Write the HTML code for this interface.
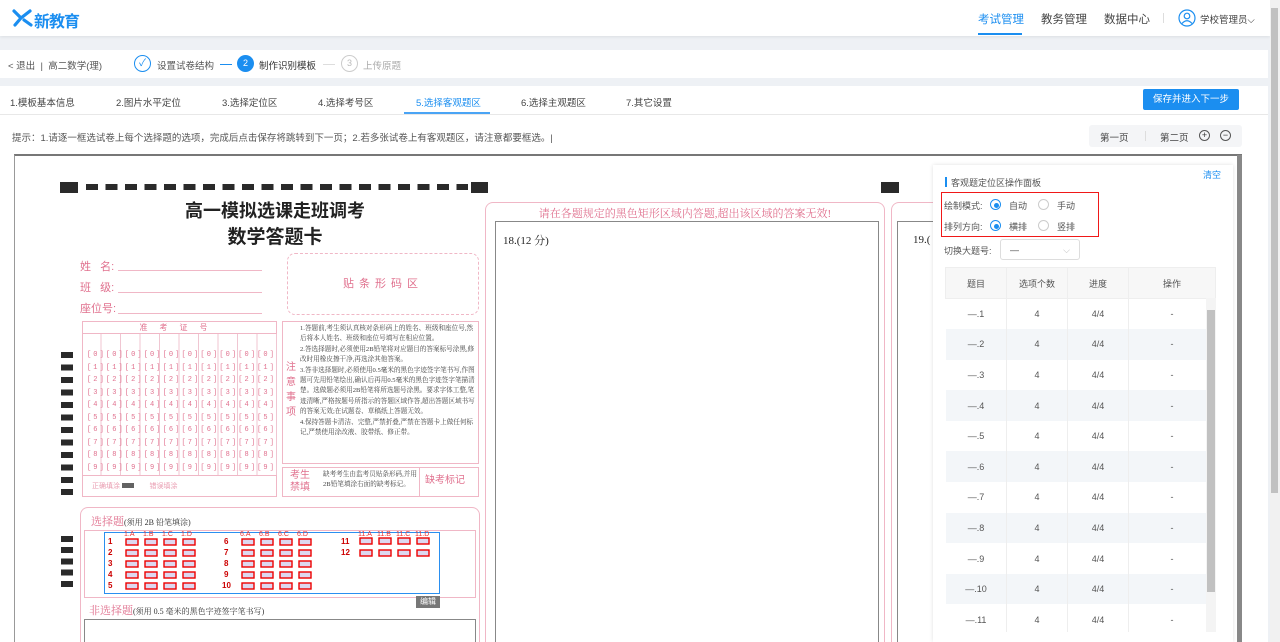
<!DOCTYPE html>
<html><head><meta charset="utf-8">
<style>
*{margin:0;padding:0;box-sizing:border-box}
html{overflow:hidden;width:1280px;height:642px}
body{width:1280px;height:642px;overflow:hidden;background:#eef1f5;font-family:"Liberation Sans","Noto Sans CJK SC",sans-serif;font-size:10px;color:#333;position:relative}
.a{position:absolute}
.pk{color:#e0708e}
.serif{font-family:"Liberation Serif","Noto Serif CJK SC",serif}
.tm{position:absolute;background:#2a2a2a}
</style></head><body>
<!-- header -->
<div class="a" style="left:0;top:0;width:1270px;height:36px;background:#fff;box-shadow:0 1px 3px rgba(0,0,0,.08)"></div>
<svg class="a" style="left:12px;top:9px" width="22" height="18" viewBox="0 0 22 18"><path d="M2 2 L9 9 L3 16 M9 9 L18 2 M12 11 L19 16" stroke="#1b8ef0" stroke-width="3.2" fill="none" stroke-linecap="round"/></svg>
<div class="a" style="left:34px;top:8px;font-size:16px;font-weight:bold;color:#1b8ef0;letter-spacing:-1px">新教育</div>
<div class="a" style="left:978px;top:11px;font-size:11.5px;color:#1b8ef0">考试管理</div>
<div class="a" style="left:978px;top:33px;width:44px;height:2px;background:#1b8ef0"></div>
<div class="a" style="left:1041px;top:11px;font-size:11.5px;color:#444">教务管理</div>
<div class="a" style="left:1104px;top:11px;font-size:11.5px;color:#444">数据中心</div>
<div class="a" style="left:1163px;top:13px;width:1px;height:10px;background:#ddd"></div>
<svg class="a" style="left:1178px;top:9px" width="18" height="18" viewBox="0 0 18 18"><circle cx="9" cy="9" r="8" fill="none" stroke="#1b8ef0" stroke-width="1.2"/><circle cx="9" cy="7" r="2.8" fill="none" stroke="#1b8ef0" stroke-width="1.2"/><path d="M4 14.5 Q9 9 14 14.5" fill="none" stroke="#1b8ef0" stroke-width="1.2"/></svg>
<div class="a" style="left:1200px;top:12px;font-size:9.5px;color:#444">学校管理员⌵</div>
<div class="a" style="left:1270px;top:0;width:10px;height:642px;background:#f1f1f1"></div>
<div class="a" style="left:1271px;top:8px;width:7px;height:485px;background:#c1c1c1"></div>
<!-- step bar -->
<div class="a" style="left:0;top:50px;width:1268px;height:28px;background:#fff"></div>
<div class="a" style="left:8px;top:58px;font-size:9.5px;color:#555">&lt; 退出 &nbsp;| &nbsp;高二数学(理)</div>
<div class="a" style="left:134px;top:55px;width:17px;height:17px;border:1px solid #1b8ef0;border-radius:50%;color:#1b8ef0;font-size:10px;text-align:center;line-height:15px">✓</div>
<div class="a" style="left:157px;top:58px;font-size:9.5px;color:#555">设置试卷结构</div>
<div class="a" style="left:220px;top:64px;width:12px;height:1px;background:#1b8ef0"></div>
<div class="a" style="left:237px;top:55px;width:17px;height:17px;background:#1b8ef0;border-radius:50%;color:#fff;font-size:9px;text-align:center;line-height:17px">2</div>
<div class="a" style="left:259px;top:58px;font-size:9.5px;color:#333">制作识别模板</div>
<div class="a" style="left:323px;top:64px;width:12px;height:1px;background:#ddd"></div>
<div class="a" style="left:341px;top:55px;width:17px;height:17px;border:1px solid #ccc;border-radius:50%;color:#bbb;font-size:9px;text-align:center;line-height:15px">3</div>
<div class="a" style="left:363px;top:58px;font-size:9.5px;color:#aaa">上传原题</div>
<!-- tabs -->
<div class="a" style="left:0;top:86px;width:1268px;height:556px;background:#fff"></div>
<div class="a" style="left:0;top:114px;width:1268px;height:1px;background:#e8e8e8"></div>
<div class="a" style="left:10px;top:95px;font-size:9.5px;color:#444">1.模板基本信息</div>
<div class="a" style="left:116px;top:95px;font-size:9.5px;color:#444">2.图片水平定位</div>
<div class="a" style="left:222px;top:95px;font-size:9.5px;color:#444">3.选择定位区</div>
<div class="a" style="left:318px;top:95px;font-size:9.5px;color:#444">4.选择考号区</div>
<div class="a" style="left:416px;top:95px;font-size:9.5px;color:#1b8ef0">5.选择客观题区</div>
<div class="a" style="left:404px;top:112px;width:86px;height:2px;background:#4aa4f5"></div>
<div class="a" style="left:521px;top:95px;font-size:9.5px;color:#444">6.选择主观题区</div>
<div class="a" style="left:626px;top:95px;font-size:9.5px;color:#444">7.其它设置</div>
<div class="a" style="left:1143px;top:89px;width:96px;height:21px;background:#1b8ef0;border-radius:2px;color:#fff;font-size:9.5px;text-align:center;line-height:21px">保存并进入下一步</div>
<div class="a" style="left:12px;top:130px;font-size:9.5px;color:#555">提示：1.请逐一框选试卷上每个选择题的选项，完成后点击保存将跳转到下一页；2.若多张试卷上有客观题区，请注意都要框选。|</div>
<div class="a" style="left:1089px;top:125px;width:153px;height:22px;background:#f4f5f7;border-radius:3px"></div>
<div class="a" style="left:1100px;top:130px;font-size:9.5px;color:#444">第一页</div>
<div class="a" style="left:1145px;top:131px;width:1px;height:10px;background:#ddd"></div>
<div class="a" style="left:1160px;top:130px;font-size:9.5px;color:#444">第二页</div>
<div class="a" style="left:1199px;top:130px;width:11px;height:11px;border:1px solid #555;border-radius:50%;font-size:9px;line-height:9px;text-align:center">+</div>
<div class="a" style="left:1220px;top:130px;width:11px;height:11px;border:1px solid #555;border-radius:50%;font-size:9px;line-height:8px;text-align:center">−</div>
<!-- paper viewer -->
<div class="a" style="left:14px;top:154px;width:1228px;height:488px;background:#fff;border-top:2px solid #777;border-left:1px solid #999;overflow:hidden"></div>
<div class="a" style="left:1237px;top:155px;width:5px;height:487px;background:#888"></div>
<!-- timing marks top -->
<div class="tm" style="left:60px;top:182px;width:18px;height:11px"></div>
<div class="a" style="left:86px;top:184px;width:382px;height:6px;background:repeating-linear-gradient(90deg,#2a2a2a 0 12px,transparent 12px 19.5px)"></div>
<div class="tm" style="left:471px;top:182px;width:17px;height:11px"></div>
<div class="tm" style="left:881px;top:182px;width:18px;height:11px"></div>
<!-- left side marks -->
<div class="a" style="left:61px;top:352px;width:12px;height:132px;background:repeating-linear-gradient(180deg,#2a2a2a 0 6px,transparent 6px 12.5px)"></div>
<div class="tm" style="left:61px;top:489px;width:12px;height:6px"></div>
<div class="a" style="left:61px;top:536px;width:12px;height:56px;background:repeating-linear-gradient(180deg,#2a2a2a 0 6px,transparent 6px 11.2px)"></div>
<!-- title -->
<div class="a" style="left:150px;top:197px;width:250px;text-align:center;font-size:18px;color:#222;font-weight:bold">高一模拟选课走班调考</div>
<div class="a" style="left:150px;top:222px;width:250px;text-align:center;font-size:19px;color:#222;font-weight:bold">数学答题卡</div>
<div class="a pk" style="left:80px;top:257px;font-size:11px;line-height:21px">姓&nbsp;&nbsp;&nbsp;名:<br>班&nbsp;&nbsp;&nbsp;级:<br>座位号:</div>
<div class="a" style="left:118px;top:270px;width:144px;height:1px;background:#f0b7c6"></div>
<div class="a" style="left:118px;top:292px;width:144px;height:1px;background:#f0b7c6"></div>
<div class="a" style="left:118px;top:313px;width:144px;height:1px;background:#f0b7c6"></div>
<div class="a pk" style="left:287px;top:253px;width:192px;height:62px;border:1px dashed #f0b7c6;border-radius:8px;text-align:center;line-height:60px;font-size:11px;letter-spacing:5px">贴条形码区</div>
<!-- exam number box -->
<div class="a" style="left:82px;top:321px;width:195px;height:176px;border:1px solid #f0b7c6"></div>
<div class="a pk" style="left:82px;top:322px;width:195px;text-align:center;font-size:8px;letter-spacing:12px">准考证号</div>
<div class="a" style="left:82px;top:333px;width:195px;height:1px;background:#f0b7c6"></div>
<div class="a" style="left:82px;top:475px;width:195px;height:1px;background:#f0b7c6"></div>
<div class="a" style="left:82px;top:334px;width:195px;height:141px;background:repeating-linear-gradient(90deg,transparent 0 18.5px,#f0c6d2 18.5px 19.5px)"></div>
<div class="a pk" style="left:87px;top:349px;width:190px;font-size:7px;line-height:12.5px;letter-spacing:2.1px;white-space:pre;font-family:'Liberation Mono',monospace">[0][0][0][0][0][0][0][0][0][0]
[1][1][1][1][1][1][1][1][1][1]
[2][2][2][2][2][2][2][2][2][2]
[3][3][3][3][3][3][3][3][3][3]
[4][4][4][4][4][4][4][4][4][4]
[5][5][5][5][5][5][5][5][5][5]
[6][6][6][6][6][6][6][6][6][6]
[7][7][7][7][7][7][7][7][7][7]
[8][8][8][8][8][8][8][8][8][8]
[9][9][9][9][9][9][9][9][9][9]</div>
<div class="a pk" style="left:92px;top:481px;font-size:7px;opacity:.7">正确填涂 <span style="display:inline-block;width:12px;height:5px;background:#222"></span> &nbsp;&nbsp;&nbsp;&nbsp;&nbsp;&nbsp; 错误填涂</div>
<!-- notes -->
<div class="a" style="left:282px;top:321px;width:197px;height:143px;border:1px solid #f0b7c6"></div>
<div class="a pk" style="left:286px;top:360px;font-size:10px;line-height:15px;width:12px">注意事项</div>
<div class="a serif" style="left:300px;top:324px;width:178px;font-size:6.6px;line-height:10.4px;color:#444">1.答题前,考生须认真核对条形码上的姓名、班级和座位号,然后将本人姓名、班级和座位号填写在相应位置。<br>2.答选择题时,必须使用2B铅笔将对应题目的答案标号涂黑,修改时用橡皮擦干净,再选涂其他答案。<br>3.答非选择题时,必须使用0.5毫米的黑色字迹签字笔书写,作图题可先用铅笔绘出,确认后再用0.5毫米的黑色字迹签字笔描清楚。选做题必须用2B铅笔将所选题号涂黑。要求字体工整,笔迹清晰,严格按题号所指示的答题区域作答,超出答题区域书写的答案无效;在试题卷、草稿纸上答题无效。<br>4.保持答题卡清洁、完整,严禁折叠,严禁在答题卡上做任何标记,严禁使用涂改液、胶带纸、修正带。</div>
<div class="a" style="left:282px;top:467px;width:197px;height:30px;border:1px solid #f0b7c6"></div>
<div class="a pk" style="left:290px;top:470px;font-size:10px;line-height:12px">考生<br>禁填</div>
<div class="a serif" style="left:323px;top:470px;width:95px;font-size:6.6px;line-height:9.5px;color:#444">缺考考生由监考员贴条形码,并用2B铅笔填涂右面的缺考标记。</div>
<div class="a" style="left:419px;top:467px;width:1px;height:30px;background:#f0b7c6"></div>
<div class="a pk" style="left:425px;top:471px;font-size:10px">缺考标记</div>
<!-- choice section -->
<div class="a" style="left:80px;top:507px;width:400px;height:135px;border:1px solid #f0b7c6;border-bottom:none;border-radius:8px 8px 0 0"></div>
<div class="a serif" style="left:91px;top:513px;font-size:11px;color:#e0708e">选择题<span style="font-size:8px;color:#333">(须用 2B 铅笔填涂)</span></div>
<div class="a" style="left:84px;top:530px;width:392px;height:68px;border:1px solid #f0b7c6"></div>
<div class="a" style="left:104px;top:532px;width:336px;height:62px;border:1.5px solid #2a8ff0"></div>
<svg class="a" style="left:100px;top:530px" width="345" height="66" font-family="Liberation Sans" font-weight="bold" font-size="8" fill="#c00">
<defs><g id="rb"><rect x="0" y="0" width="12" height="6" fill="#ddd8f0" stroke="#e00" stroke-width="1.4"/></g></defs>
<text x="8" y="14">1</text><text x="8" y="25">2</text><text x="8" y="36">3</text><text x="8" y="47">4</text><text x="8" y="58">5</text>
<text x="124" y="14">6</text><text x="124" y="25">7</text><text x="124" y="36">8</text><text x="124" y="47">9</text><text x="122" y="58">10</text>
<text x="241" y="14">11</text><text x="241" y="25">12</text>
<g fill="#e33" font-weight="normal" font-size="7"><text x="24" y="6">1.A</text><text x="43" y="6">1.B</text><text x="62" y="6">1.C</text><text x="81" y="6">1.D</text><text x="140" y="6">6.A</text><text x="159" y="6">6.B</text><text x="178" y="6">6.C</text><text x="197" y="6">6.D</text><text x="258" y="6">11.A</text><text x="277" y="6">11.B</text><text x="296" y="6">11.C</text><text x="315" y="6">11.D</text></g>
<use href="#rb" x="26" y="9"/><use href="#rb" x="45" y="9"/><use href="#rb" x="64" y="9"/><use href="#rb" x="83" y="9"/>
<use href="#rb" x="26" y="20"/><use href="#rb" x="45" y="20"/><use href="#rb" x="64" y="20"/><use href="#rb" x="83" y="20"/>
<use href="#rb" x="26" y="31"/><use href="#rb" x="45" y="31"/><use href="#rb" x="64" y="31"/><use href="#rb" x="83" y="31"/>
<use href="#rb" x="26" y="42"/><use href="#rb" x="45" y="42"/><use href="#rb" x="64" y="42"/><use href="#rb" x="83" y="42"/>
<use href="#rb" x="26" y="53"/><use href="#rb" x="45" y="53"/><use href="#rb" x="64" y="53"/><use href="#rb" x="83" y="53"/>
<use href="#rb" x="142" y="9"/><use href="#rb" x="161" y="9"/><use href="#rb" x="180" y="9"/><use href="#rb" x="199" y="9"/>
<use href="#rb" x="142" y="20"/><use href="#rb" x="161" y="20"/><use href="#rb" x="180" y="20"/><use href="#rb" x="199" y="20"/>
<use href="#rb" x="142" y="31"/><use href="#rb" x="161" y="31"/><use href="#rb" x="180" y="31"/><use href="#rb" x="199" y="31"/>
<use href="#rb" x="142" y="42"/><use href="#rb" x="161" y="42"/><use href="#rb" x="180" y="42"/><use href="#rb" x="199" y="42"/>
<use href="#rb" x="142" y="53"/><use href="#rb" x="161" y="53"/><use href="#rb" x="180" y="53"/><use href="#rb" x="199" y="53"/>
<use href="#rb" x="260" y="8"/><use href="#rb" x="279" y="8"/><use href="#rb" x="298" y="8"/><use href="#rb" x="317" y="8"/>
<use href="#rb" x="260" y="20"/><use href="#rb" x="279" y="20"/><use href="#rb" x="298" y="20"/><use href="#rb" x="317" y="20"/>
</svg>
<div class="a" style="left:416px;top:596px;width:24px;height:12px;background:#777;color:#fff;font-size:8px;text-align:center;line-height:12px">编辑</div>
<div class="a serif" style="left:89px;top:602px;font-size:11px;color:#e0708e">非选择题<span style="font-size:8px;color:#333">(须用 0.5 毫米的黑色字迹签字笔书写)</span></div>
<div class="a" style="left:84px;top:619px;width:392px;height:23px;border:1px solid #888;border-bottom:none"></div>
<!-- middle column -->
<div class="a" style="left:485px;top:202px;width:400px;height:440px;border:1px solid #f0b7c6;border-bottom:none;border-radius:8px 8px 0 0"></div>
<div class="a serif pk" style="left:485px;top:205px;width:400px;text-align:center;font-size:11px">请在各题规定的黑色矩形区域内答题,超出该区域的答案无效!</div>
<div class="a" style="left:495px;top:221px;width:384px;height:421px;border:1px solid #888;border-bottom:none"></div>
<div class="a serif" style="left:503px;top:232px;font-size:11px;color:#222">18.(12 分)</div>
<div class="a" style="left:891px;top:202px;width:60px;height:440px;border:1px solid #f0b7c6;border-radius:8px 0 0 0;border-right:none;border-bottom:none"></div>
<div class="a" style="left:897px;top:221px;width:50px;height:421px;border:1px solid #888;border-right:none;border-bottom:none"></div>
<div class="a serif" style="left:913px;top:234px;font-size:11px;color:#222">19.(</div>
<!-- right panel -->
<div class="a" style="left:933px;top:165px;width:300px;height:477px;background:#fff;box-shadow:0 0 4px rgba(0,0,0,.12)"></div>
<div class="a" style="left:1203px;top:168px;font-size:9px;color:#1b8ef0">清空</div>
<div class="a" style="left:945px;top:177px;width:2px;height:10px;background:#1b8ef0"></div>
<div class="a" style="left:951px;top:176px;font-size:9px;color:#555">客观题定位区操作面板</div>
<div class="a" style="left:941px;top:192px;width:158px;height:45px;border:1.5px solid #f01818"></div>
<div class="a" style="left:944px;top:199px;font-size:9px;color:#555">绘制模式:</div>
<div class="a" style="left:990px;top:199px;width:11px;height:11px;border:1px solid #1b8ef0;border-radius:50%"><div style="margin:2.5px;width:5px;height:5px;background:#1b8ef0;border-radius:50%"></div></div>
<div class="a" style="left:1009px;top:199px;font-size:9px;color:#555">自动</div>
<div class="a" style="left:1038px;top:199px;width:11px;height:11px;border:1px solid #ccc;border-radius:50%"></div>
<div class="a" style="left:1057px;top:199px;font-size:9px;color:#555">手动</div>
<div class="a" style="left:944px;top:220px;font-size:9px;color:#555">排列方向:</div>
<div class="a" style="left:990px;top:220px;width:11px;height:11px;border:1px solid #1b8ef0;border-radius:50%"><div style="margin:2.5px;width:5px;height:5px;background:#1b8ef0;border-radius:50%"></div></div>
<div class="a" style="left:1009px;top:220px;font-size:9px;color:#555">横排</div>
<div class="a" style="left:1038px;top:220px;width:11px;height:11px;border:1px solid #ccc;border-radius:50%"></div>
<div class="a" style="left:1057px;top:220px;font-size:9px;color:#555">竖排</div>
<div class="a" style="left:944px;top:244px;font-size:9px;color:#555">切换大题号:</div>
<div class="a" style="left:1000px;top:239px;width:80px;height:21px;border:1px solid #ddd;border-radius:3px;font-size:9px;color:#444;padding:5px 9px">—<span style="float:right;color:#bbb">⌵</span></div>
<div class="a" style="left:945px;top:267px;width:271px;height:375px;overflow:hidden">
<table style="width:271px;border-collapse:collapse;font-size:9px;color:#555;text-align:center">
<tr style="background:#f7f7f7;height:31px"><td style="width:61px;border:1px solid #eee">题目</td><td style="width:61px;border:1px solid #eee">选项个数</td><td style="width:61px;border:1px solid #eee">进度</td><td style="border:1px solid #eee">操作</td></tr>
<tr style="height:30.6px"><td>—.1</td><td>4</td><td>4/4</td><td>-</td></tr>
<tr style="height:30.6px;background:#f3f6f9"><td>—.2</td><td>4</td><td>4/4</td><td>-</td></tr>
<tr style="height:30.6px"><td>—.3</td><td>4</td><td>4/4</td><td>-</td></tr>
<tr style="height:30.6px;background:#f3f6f9"><td>—.4</td><td>4</td><td>4/4</td><td>-</td></tr>
<tr style="height:30.6px"><td>—.5</td><td>4</td><td>4/4</td><td>-</td></tr>
<tr style="height:30.6px;background:#f3f6f9"><td>—.6</td><td>4</td><td>4/4</td><td>-</td></tr>
<tr style="height:30.6px"><td>—.7</td><td>4</td><td>4/4</td><td>-</td></tr>
<tr style="height:30.6px;background:#f3f6f9"><td>—.8</td><td>4</td><td>4/4</td><td>-</td></tr>
<tr style="height:30.6px"><td>—.9</td><td>4</td><td>4/4</td><td>-</td></tr>
<tr style="height:30.6px;background:#f3f6f9"><td>—.10</td><td>4</td><td>4/4</td><td>-</td></tr>
<tr style="height:30.6px"><td>—.11</td><td>4</td><td>4/4</td><td>-</td></tr>
</table></div>
<div class="a" style="left:1006px;top:298px;width:1px;height:334px;background:#eee"></div>
<div class="a" style="left:1067px;top:298px;width:1px;height:334px;background:#eee"></div>
<div class="a" style="left:1128px;top:298px;width:1px;height:334px;background:#eee"></div>
<div class="a" style="left:1206px;top:298px;width:10px;height:334px;background:#f4f4f4"></div>
<div class="a" style="left:1207px;top:310px;width:8px;height:282px;background:#c1c1c1"></div>
</body></html>
